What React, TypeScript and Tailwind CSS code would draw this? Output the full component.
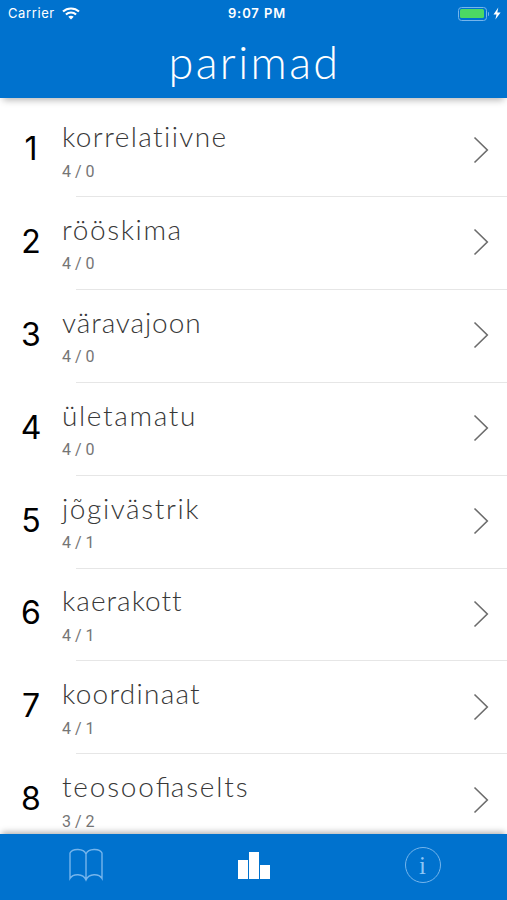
type Entry = {
  word: string;
  score: string;
  tracking: string;
};

const ENTRIES: Entry[] = [
  { word: 'korrelatiivne', score: '4 / 0', tracking: 'tracking-[1.4px]' },
  { word: 'rööskima', score: '4 / 0', tracking: 'tracking-[1.6px]' },
  { word: 'väravajoon', score: '4 / 0', tracking: 'tracking-[0.9px]' },
  { word: 'ületamatu', score: '4 / 0', tracking: 'tracking-[1.65px]' },
  { word: 'jõgivästrik', score: '4 / 1', tracking: 'tracking-[1.6px]' },
  { word: 'kaerakott', score: '4 / 1', tracking: 'tracking-[1px]' },
  { word: 'koordinaat', score: '4 / 1', tracking: 'tracking-[1.25px]' },
  { word: 'teosoofiaselts', score: '3 / 2', tracking: 'tracking-[1.8px]' },
];

function WifiIcon() {
  return (
    <svg width="18" height="13" viewBox="0 0 18 13" fill="none" stroke="#fff" strokeWidth="2.1">
      <path d="M1 4.6C5.4.4 12.6.4 17 4.6" />
      <path d="M3.9 7.5C6.8 4.8 11.2 4.8 14.1 7.5" />
      <path d="M6.3 9.8 9 12.5l2.7-2.7C10.2 8.5 7.8 8.5 6.3 9.8Z" fill="#fff" stroke="none" />
    </svg>
  );
}

function StatusBar() {
  return (
    <div className="grid h-[27px] grid-cols-[1fr_auto_1fr] items-center pl-[8px] pr-[6px] font-['Inter'] text-[13px] text-white">
      <div className="flex items-center gap-[7px]">
        <span className="tracking-[0.6px]">Carrier</span>
        <WifiIcon />
      </div>
      <span className="pl-[5px] font-semibold tracking-[0.9px]">9:07 PM</span>
      <div className="flex items-center justify-end">
        <div className="h-[14px] w-[29px] rounded-[3.5px] border border-[#75b5ec] p-[1.5px]">
          <div className="h-full rounded-[1.5px] bg-[#4cd964]" />
        </div>
        <div className="ml-px h-[4px] w-[1.5px] rounded-r bg-[#75b5ec]" />
        <svg className="ml-[4px]" width="8" height="13" viewBox="0 0 8 13" fill="#fff">
          <path d="M5.3.5.5 7.5h3L2.4 12.5 7.6 5.5H4.3Z" />
        </svg>
      </div>
    </div>
  );
}

function Row({ entry, rank }: { entry: Entry; rank: number }) {
  const [head, tail] = entry.word.split('fi');
  return (
    <li className="flex h-[92.9px] shrink-0">
      <span className="w-[62px] pt-[24px] text-center font-['Inter'] text-[32px] leading-[42px] text-black">
        {rank}
      </span>
      <div className="min-w-0 flex-1">
        <div className={`pt-[14px] text-[28px] font-light leading-[36px] text-[#383838] ${entry.tracking}`}>
          {head}
          {tail !== undefined && <span className="tracking-normal">fi</span>}
          {tail}
        </div>
        <div className="pt-[6.5px] font-['Roboto'] text-[16px] leading-[22px] text-[#757575]">{entry.score}</div>
        <div className="ml-[14px] mt-[13.5px] h-px bg-[#e6e6e6]" />
      </div>
      <div className="-ml-[34px] w-[34px] pt-[31.5px]">
        <svg width="17" height="28" viewBox="0 0 17 28" fill="none" stroke="#6c6c6c" strokeWidth="1.6">
          <path d="M1.5 1.5 14.3 14 1.5 26.5" />
        </svg>
      </div>
    </li>
  );
}

function TabBar() {
  return (
    <nav className="z-10 grid h-[66px] shrink-0 grid-cols-3 bg-[#0072ce] shadow-[0_-4px_6px_-2px_rgba(0,0,0,0.3)]">
      <button className="flex justify-center pl-[2px] pt-[14px]" aria-label="Sõnad">
        <svg width="34" height="34" viewBox="0 0 34 34" fill="none" stroke="#75b5ec" strokeWidth="1.4">
          <path d="M17 6C14.5.2 3.500.2 1 5v25.500c3-5 13-5.500 16 1.500 3-7 13-6.500 16-1.500V5C30.500.2 19.500.2 17 6ZM17 6v26" />
        </svg>
      </button>
      <button className="flex justify-center pl-[2px] pt-[17px]" aria-label="Parimad">
        <svg width="33" height="28" viewBox="0 0 33 28" fill="#fff">
          <path d="M0 9h10v19H0zM11 1h10v27H11zM22 14h10v14H22z" />
        </svg>
      </button>
      <button className="flex justify-center pt-[13px]" aria-label="Info">
        <span className="flex h-[36px] w-[36px] items-center justify-center rounded-full border-[1.5px] border-[#75b5ec] font-['Liberation_Serif'] text-[25px] leading-none text-[#8cc6f6]">
          i
        </span>
      </button>
    </nav>
  );
}

export default function App() {
  return (
    <div className="flex h-[900px] w-[507px] flex-col overflow-hidden bg-white font-['Lato',sans-serif]">
      <header className="z-10 h-[98px] shrink-0 bg-[#0072ce] shadow-[0_5px_7px_-3px_rgba(0,0,0,0.3)]">
        <StatusBar />
        <h1 className="pl-[2px] pt-[8px] text-center text-[45px] font-light leading-[54px] tracking-[2.4px] text-white">
          parimad
        </h1>
      </header>
      <ul className="flex min-h-0 flex-1 flex-col overflow-hidden pt-[6px]">
        {ENTRIES.map((entry, i) => (
          <Row key={entry.word} entry={entry} rank={i + 1} />
        ))}
      </ul>
      <TabBar />
    </div>
  );
}
